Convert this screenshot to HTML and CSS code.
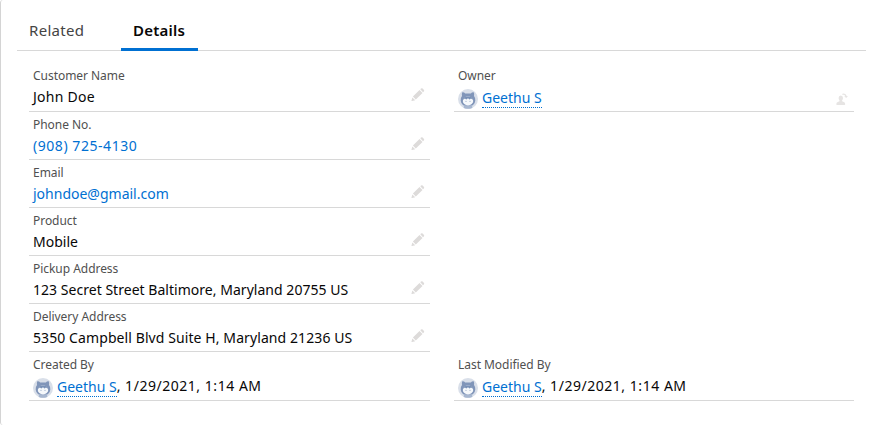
FILE: index.html
```html
<!DOCTYPE html>
<html lang="en">
<head>
<meta charset="utf-8">
<title>Details</title>
<link rel="stylesheet" href="styles.css">
</head>
<body>
<svg class="defs" aria-hidden="true">
  <symbol id="pencil" viewBox="0 0 14 14">
    <path d="M1.900 8.600 8.500 2l3 3-6.700 6.600zM9.300 1.300l.7-.7q.8-.7 1.600 0l1.200 1.200q.8.800 0 1.600l-.8.8zM1.400 9.400l2.800 2.800-3.100.9q-.8.100-.6-.7z"/>
  </symbol>
  <symbol id="owner-change" viewBox="0 0 14 14">
    <path d="M1 13q-.7 0-.7-.8 0-1.500 1.500-2.100l1.700-.8v-.9Q2.600 7.400 2.600 6q0-2.500 2.200-2.500T7 6q0 1.400-.9 2.400v.9l1.700.8q1.400.6 1.400 2.100 0 .8-.7.8z"/>
    <path d="M6.300 1.700Q9.700.6 10.700 4h1.200l-1.700 2-2-1.700h1.200Q8.700 2.200 6.500 3z"/>
  </symbol>
  <symbol id="avatar" viewBox="0 0 20 20">
    <circle cx="10" cy="10" r="10" fill="#d9dfe9"/>
    <path d="M4.300 3.300q1.900-.2 2.800 1.300h5.800q.9-1.500 2.800-1.300.7 1.700.3 3.700 1.500 1.800 1.300 4.500-.5 4.300-4.300 5.500H7q-3.800-1.200-4.300-5.500-.2-2.700 1.300-4.500-.4-2 .3-3.700z" fill="#8095b9"/>
    <path d="M6 16.300h8l.3 2.700q-4.300 1.700-8.600 0z" fill="#a7b7d0"/>
    <ellipse cx="10" cy="12" rx="5.200" ry="4.400" fill="#f5f8fb"/>
    <path d="M5 10.800Q5.800 7.400 10 7.400t5 3.400l-2-1.300-1.500 1-1.500-1.300-1.700 1.200-1.400-.9z" fill="#7890b6"/>
    <circle cx="8" cy="12.300" r=".6" fill="#9caeca"/><circle cx="12" cy="12.300" r=".6" fill="#9caeca"/>
  </symbol>
</svg>
<main class="card">
  <nav class="tabs">
    <a class="tab">Related</a>
    <a class="tab active">Details</a>
  </nav>
  <section class="fields">
    <div class="field tall"><div class="label">Customer Name</div><div class="value name">John Doe</div><svg class="edit raised"><use href="#pencil"/></svg></div>
    <div class="field tall person"><div class="label">Owner</div><div class="value"><svg class="avatar"><use href="#avatar"/></svg><a class="user">Geethu S</a></div><svg class="edit owner"><use href="#owner-change"/></svg></div>
    <div class="field"><div class="label">Phone No.</div><div class="value link phone">(908) 725-4130</div><svg class="edit"><use href="#pencil"/></svg></div>
    <div class="field"><div class="label">Email</div><div class="value link email">johndoe@gmail.com</div><svg class="edit"><use href="#pencil"/></svg></div>
    <div class="field"><div class="label">Product</div><div class="value">Mobile</div><svg class="edit"><use href="#pencil"/></svg></div>
    <div class="field"><div class="label">Pickup Address</div><div class="value pickup">123 Secret Street Baltimore, Maryland 20755 US</div><svg class="edit"><use href="#pencil"/></svg></div>
    <div class="field"><div class="label">Delivery Address</div><div class="value delivery">5350 Campbell Blvd Suite H, Maryland 21236 US</div><svg class="edit"><use href="#pencil"/></svg></div>
    <div class="field tall person"><div class="label">Created By</div><div class="value"><svg class="avatar"><use href="#avatar"/></svg><a class="user">Geethu S</a><span class="date">, 1/29/2021, 1:14 AM</span></div></div>
    <div class="field tall person"><div class="label">Last Modified By</div><div class="value"><svg class="avatar"><use href="#avatar"/></svg><a class="user">Geethu S</a><span class="date">, 1/29/2021, 1:14 AM</span></div></div>
  </section>
</main>
</body>
</html>
```

FILE: styles.css
```css
* { box-sizing: border-box; }
body { margin: 0; background: #fff; font-family: "Noto Sans", sans-serif; color: #080707; }
.defs { position: absolute; width: 0; height: 0; }
.card { height: 425px; padding: 10px 16px 0 16px; border-left: 1px solid #d4d4d4; border-radius: 3px; }
.tabs { display: flex; gap: 12px; height: 41px; width: 849px; border-bottom: 1px solid #d8d8d8; }
.tab { height: 41px; padding: 0 12px; font-size: 15px; line-height: 41px; letter-spacing: .3px; color: #444; white-space: nowrap; }
.tab:first-child { width: 92px; }
.tab.active { width: 77px; color: #080707; font-weight: 600; letter-spacing: .25px; border-bottom: 3px solid #0070d2; }
.fields { display: grid; grid-template-columns: 401px 400px; column-gap: 24px; padding: 12px 0 0 12px; }
.field { grid-column: 1; position: relative; height: 48px; padding: 4px 4px 0; border-bottom: 1px solid #d8d8d8; }
.field.tall { height: 49px; }
.field.person:nth-child(2), .field:last-child { grid-column: 2; }
.label { height: 18px; font-size: 12px; line-height: 18px; letter-spacing: -.04px; color: #505050; white-space: nowrap; }
.value { height: 24px; display: flex; font-size: 14px; line-height: 24px; white-space: nowrap; }
.name { letter-spacing: .27px; }
.phone { letter-spacing: .55px; }
.pickup { letter-spacing: .03px; }
.delivery { letter-spacing: .09px; }
.date { letter-spacing: .53px; }
.link, .user { color: #0070d2; }
.avatar { width: 20px; height: 20px; margin: 4px 4px 0 0; flex: none; }
.user { height: 22px; border-bottom: 1px dotted #0070d2; margin-top: 1px; line-height: 24px; }
.edit { position: absolute; right: 5px; bottom: 8px; width: 14px; height: 14px; fill: #dddbda; }
.raised { bottom: 9px; }
.owner { right: 4px; bottom: 5px; fill: #e6e4e3; }
```
